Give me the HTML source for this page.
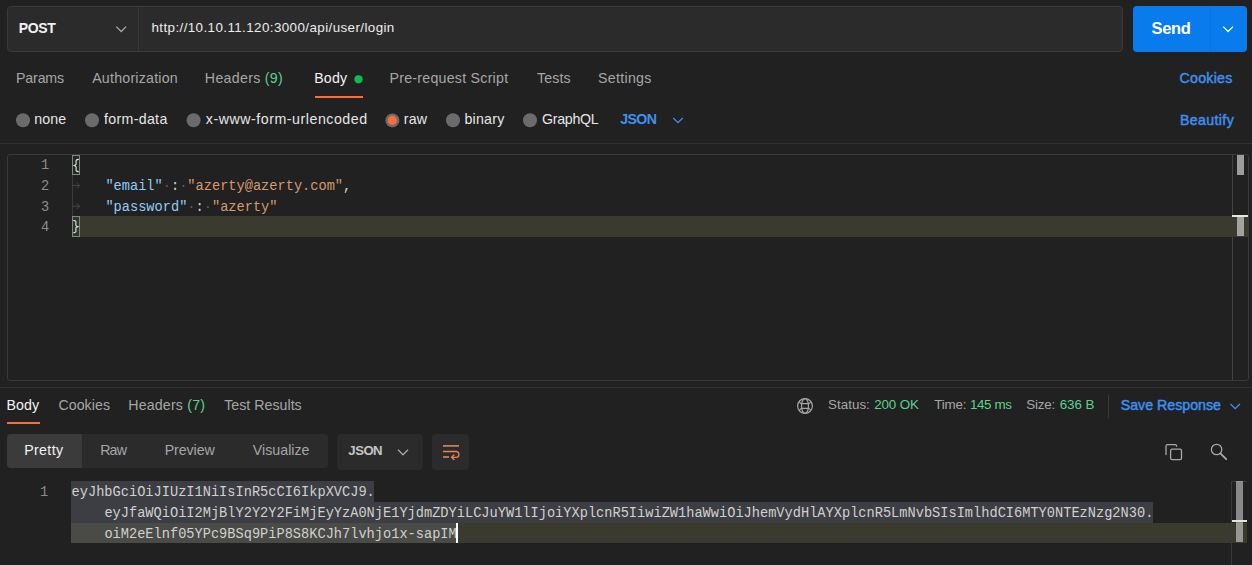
<!DOCTYPE html>
<html><head><meta charset="utf-8">
<style>
html,body{margin:0;padding:0;}
body{width:1252px;height:565px;overflow:hidden;background:#212121;position:relative;font-family:"Liberation Sans",sans-serif;}
.a{position:absolute;box-sizing:border-box;}
.t{position:absolute;white-space:nowrap;line-height:1;}
.ml{position:absolute;white-space:pre;transform-origin:0 14px;transform:scaleY(1.08);font-family:"Liberation Mono",monospace;font-size:13.670px;line-height:20.75px;height:20.75px;}
.ml>span,.ml{vertical-align:top;}
.ln{position:absolute;text-align:right;transform-origin:0 14px;transform:scaleY(1.08);font-family:"Liberation Mono",monospace;font-size:13.670px;line-height:20.75px;color:#8c8c8c;}
.tab{color:#4a4a4a;}
svg{position:absolute;overflow:visible;}
</style></head><body>
<!-- URL bar -->
<div class="a" style="left:7px;top:6px;width:1116px;height:46px;background:#2b2b2b;border:1px solid #3a3a3a;border-radius:4px;"></div>
<div class="a" style="left:138px;top:7px;width:1px;height:44px;background:#3a3a3a;"></div>
<svg width="1252" height="565" style="left:0;top:0">
  <polyline points="116.3,26.6 121.2,31.5 126.1,26.6" fill="none" stroke="#a6a6a6" stroke-width="1.3"/>
</svg>
<!-- Send -->
<div class="a" style="left:1133px;top:6px;width:114px;height:46px;background:#097bed;border-radius:4px;"></div>
<div class="a" style="left:1209.5px;top:6px;width:1px;height:46px;background:#0b72de;"></div>
<svg width="1252" height="565" style="left:0;top:0">
  <polyline points="1223.2,26.6 1228.1,31.5 1233,26.6" fill="none" stroke="#ffffff" stroke-width="1.3"/>
  <!-- body dot -->
  <circle cx="358.5" cy="79.3" r="4.1" fill="#0cbb52"/>
  <!-- radios -->
  <circle cx="23" cy="120.3" r="7" fill="#6b6b6b"/>
  <circle cx="92" cy="120.3" r="7" fill="#6b6b6b"/>
  <circle cx="193.6" cy="120.3" r="7" fill="#6b6b6b"/>
  <circle cx="392.4" cy="120.4" r="7" fill="#6b6b6b"/>
  <circle cx="392.4" cy="120.4" r="4.6" fill="#ff6c37"/>
  <circle cx="453" cy="120.3" r="7" fill="#6b6b6b"/>
  <circle cx="530" cy="120.3" r="7" fill="#6b6b6b"/>
  <polyline points="673.3,118 678,122.7 682.7,118" fill="none" stroke="#3e90f0" stroke-width="1.3"/>
</svg>
<div class="a" style="left:315px;top:96px;width:48px;height:2px;background:#ff6c37;"></div>
<!-- separator -->
<div class="a" style="left:0;top:143px;width:1252px;height:1px;background:#303030;"></div>
<!-- request editor -->
<div class="a" style="left:7px;top:154px;width:1242px;height:227px;border:1px solid #3a3a3a;border-radius:3px;"></div>
<div class="a" style="left:80px;top:216.25px;width:1152px;height:20.75px;background:#3b3a2f;"></div>
<div class="a" style="left:72px;top:155px;width:8px;height:19.8px;border:1px solid #858585;background:#1d2a1d;"></div>
<div class="a" style="left:72px;top:216.2px;width:8px;height:20.8px;border:1px solid #858585;background:#2a3828;"></div>
<svg width="1252" height="565" style="left:0;top:0"><g fill="none" stroke="#e4e4e4" stroke-width="1.15">
<path d="M78.8,159.4 C76.2,159.2 75.7,160.4 76.1,162.4 C76.5,164.5 75.8,165.3 73.4,165.5 C75.8,165.7 76.5,166.5 76.1,168.6 C75.7,170.6 76.2,171.8 78.8,171.6"/>
<path d="M73.2,220.5 C75.8,220.3 76.3,221.5 75.9,223.5 C75.5,225.6 76.2,226.4 78.6,226.6 C76.2,226.8 75.5,227.6 75.9,229.7 C76.3,231.7 75.8,232.9 73.2,232.7"/>
</g></svg>
<div class="a" style="left:72px;top:174.8px;width:1px;height:41.5px;background:#3c3c3c;"></div>
<svg width="1252" height="565" style="left:0;top:0"><g fill="none" stroke="#474747" stroke-width="1">
<path d="M72.5,185.4 H79.6 M76.8,182.6 L79.6,185.4 L76.8,188.2"/>
<path d="M72.5,206.2 H79.6 M76.8,203.4 L79.6,206.2 L76.8,209"/>
</g></svg>
<div class="a" style="left:1232px;top:155px;width:1px;height:225px;background:#434343;"></div>
<div class="a" style="left:1232px;top:216.2px;width:16px;height:20.8px;background:#3b3a2f;"></div>
<div class="a" style="left:1237px;top:155px;width:7px;height:20px;background:#9c9c9c;"></div>
<div class="a" style="left:1237px;top:216px;width:7px;height:20px;background:#a2a29e;"></div>
<div class="a" style="left:1232px;top:215.1px;width:16px;height:1.8px;background:#e6e6dc;"></div>
<div class="ln" style="top:156.00px;left:0;width:49.2px">1</div>
<div class="ln" style="top:176.75px;left:0;width:49.2px">2</div>
<div class="ln" style="top:197.50px;left:0;width:49.2px">3</div>
<div class="ln" style="top:218.25px;left:0;width:49.2px">4</div>
<div class="ml" style="left:72.60px;top:176.75px">&nbsp;&nbsp;&nbsp;&nbsp;<span style="color:#8fcdf7">"email"</span><span style="color:#5a5a5a">·</span><span style="color:#d4d4d4">:</span><span style="color:#5a5a5a">·</span><span style="color:#d69a6e">"azerty@azerty.com"</span><span style="color:#d4d4d4">,</span></div>
<div class="ml" style="left:72.60px;top:197.50px">&nbsp;&nbsp;&nbsp;&nbsp;<span style="color:#8fcdf7">"password"</span><span style="color:#5a5a5a">·</span><span style="color:#d4d4d4">:</span><span style="color:#5a5a5a">·</span><span style="color:#d69a6e">"azerty"</span></div>
<!-- response separator -->
<div class="a" style="left:0;top:387px;width:1252px;height:1px;background:#303030;"></div>
<div class="a" style="left:7px;top:422px;width:33px;height:2px;background:#ff6c37;"></div>

<div class="a" style="left:1108px;top:395px;width:1px;height:23px;background:#3a3a3a;"></div>
<!-- segmented -->
<div class="a" style="left:7px;top:434px;width:321px;height:34px;background:#2b2b2b;border-radius:4px;"></div>
<div class="a" style="left:7px;top:434px;width:75px;height:34px;background:#3b3b3b;border-radius:4px 0 0 4px;"></div>
<div class="a" style="left:337px;top:434px;width:86px;height:36px;background:#2b2b2b;border-radius:4px;"></div>
<div class="a" style="left:432px;top:434px;width:37px;height:36px;background:#2b2b2b;border-radius:4px;"></div>
<!-- response editor -->
<div class="a" style="left:71px;top:481px;width:303.2px;height:20.75px;background:#3d3e43;"></div>
<div class="a" style="left:71px;top:501.75px;width:1081.9px;height:20.75px;background:#3d3e43;"></div>
<div class="a" style="left:457px;top:522.5px;width:790px;height:20.75px;background:#3b3a2f;"></div>
<div class="a" style="left:71px;top:522.5px;width:385px;height:20.75px;background:#4a4a46;"></div>
<div class="a" style="left:1231px;top:481px;width:1px;height:84px;background:#3a3a3a;"></div>
<div class="a" style="left:1231px;top:481px;width:16px;height:1px;background:#3a3a3a;"></div>
<div class="a" style="left:1236px;top:481px;width:7px;height:61px;background:rgba(255,255,255,0.47);"></div>
<div class="a" style="left:1231.5px;top:520.2px;width:15.5px;height:2px;background:#e6e6dc;"></div>
<div class="ln" style="top:483.00px;left:0;width:48.2px">1</div>
<div class="ml" style="left:71.60px;top:483.00px"><span style="color:#d0d0d0">eyJhbGciOiJIUzI1NiIsInR5cCI6IkpXVCJ9.</span></div>
<div class="ml" style="left:71.60px;top:503.75px">&nbsp;&nbsp;&nbsp;&nbsp;<span style="color:#d0d0d0">eyJfaWQiOiI2MjBlY2Y2Y2FiMjEyYzA0NjE1YjdmZDYiLCJuYW1lIjoiYXplcnR5IiwiZW1haWwiOiJhemVydHlAYXplcnR5LmNvbSIsImlhdCI6MTY0NTEzNzg2N30.</span></div>
<div class="ml" style="left:71.60px;top:524.50px">&nbsp;&nbsp;&nbsp;&nbsp;<span style="color:#d0d0d0">oiM2eElnf05YPc9BSq9PiP8S8KCJh7lvhjo1x-sapIM</span></div>
<svg width="1252" height="565" style="left:0;top:0">
  <g fill="none" stroke="#a6a6a6" stroke-width="1.2">
    <circle cx="805" cy="406" r="7.4"/>
    <ellipse cx="805" cy="406" rx="3.5" ry="7.4"/>
    <path d="M799.3,401.4 Q800.3,403.6 801.6,403.6 H808.4 Q809.7,403.6 810.7,401.4"/>
    <path d="M799.3,410.6 Q800.3,408.4 801.6,408.4 H808.4 Q809.7,408.4 810.7,410.6"/>
  </g>
  <polyline points="1230.5,404 1235.2,408.7 1239.9,404" fill="none" stroke="#3e90f0" stroke-width="1.3"/>
  <polyline points="398,449.8 403,454.8 408,449.8" fill="none" stroke="#a6a6a6" stroke-width="1.3"/>
  <!-- wrap icon -->
  <g fill="none" stroke="#e9825a">
    <line x1="443" y1="445.9" x2="459" y2="445.9" stroke-width="1.6"/>
    <path d="M443,451.5 H456 A2.9,2.9 0 0 1 456,457.3 H451.8" stroke-width="1.3"/>
    <polyline points="453.9,455.1 451.6,457.3 453.9,459.5" stroke-width="1.4" stroke-linecap="round" stroke-linejoin="round"/>
    <line x1="443" y1="457" x2="449" y2="457" stroke-width="1.6"/>
  </g>
  <!-- copy icon -->
  <g fill="none" stroke="#a8a8a8" stroke-width="1.3" stroke-linecap="round">
    <path d="M1166,454.5 V446.2 A1.6,1.6 0 0 1 1167.6,444.6 H1175 A1.6,1.6 0 0 1 1176.6,446.2"/>
    <rect x="1170.6" y="449.1" width="10.9" height="10.5" rx="1.6"/>
  </g>
  <!-- search icon -->
  <g fill="none" stroke="#a8a8a8" stroke-linecap="round">
    <circle cx="1216.6" cy="449.5" r="5.2" stroke-width="1.3"/>
    <line x1="1220.6" y1="453.6" x2="1226.2" y2="459.2" stroke-width="1.9"/>
  </g>
</svg>
<div class="a" style="left:455.8px;top:522.8px;width:2px;height:20px;background:#ffffff;"></div>
<div class="t" style="left:18.85px;top:21.15px;font-size:14px;font-weight:700;color:#f2f2f2;letter-spacing:-0.355px">POST</div>
<div class="t" style="left:151.45px;top:21.45px;font-size:13.4px;font-weight:400;color:#ededed;letter-spacing:0.403px">http://10.10.11.120:3000/api/user/login</div>
<div class="t" style="left:1151.55px;top:20.03px;font-size:16.5px;font-weight:700;color:#ffffff;letter-spacing:-0.387px">Send</div>
<div class="t" style="left:16.05px;top:70.98px;font-size:14.2px;font-weight:400;color:#a6a6a6;letter-spacing:-0.165px">Params</div>
<div class="t" style="left:92.15px;top:70.98px;font-size:14.2px;font-weight:400;color:#a6a6a6;letter-spacing:0.234px">Authorization</div>
<div class="t" style="left:204.85px;top:70.98px;font-size:14.2px;font-weight:400;color:#a6a6a6;letter-spacing:0.296px"><span style="color:#a6a6a6">Headers </span><span style="color:#5cd18c">(9)</span></div>
<div class="t" style="left:314.15px;top:70.98px;font-size:14.2px;font-weight:400;color:#f2f2f2;letter-spacing:0.211px">Body</div>
<div class="t" style="left:389.55px;top:70.98px;font-size:14.2px;font-weight:400;color:#a6a6a6;letter-spacing:0.248px">Pre-request&nbsp;Script</div>
<div class="t" style="left:537.05px;top:70.98px;font-size:14.2px;font-weight:400;color:#a6a6a6;letter-spacing:0.114px">Tests</div>
<div class="t" style="left:598.05px;top:70.98px;font-size:14.2px;font-weight:400;color:#a6a6a6;letter-spacing:0.299px">Settings</div>
<div class="t" style="left:1179.47px;top:71.04px;font-size:14.2px;font-weight:400;color:#3e90f0;letter-spacing:0.275px;-webkit-text-stroke:0.45px #3e90f0">Cookies</div>
<div class="t" style="left:34.15px;top:112.18px;font-size:14.2px;font-weight:400;color:#e6e6e6;letter-spacing:0.136px">none</div>
<div class="t" style="left:103.95px;top:112.18px;font-size:14.2px;font-weight:400;color:#e6e6e6;letter-spacing:0.329px">form-data</div>
<div class="t" style="left:205.85px;top:112.18px;font-size:14.2px;font-weight:400;color:#e6e6e6;letter-spacing:0.534px">x-www-form-urlencoded</div>
<div class="t" style="left:403.85px;top:112.18px;font-size:14.2px;font-weight:400;color:#e6e6e6;letter-spacing:0.137px">raw</div>
<div class="t" style="left:464.45px;top:112.18px;font-size:14.2px;font-weight:400;color:#e6e6e6;letter-spacing:0.245px">binary</div>
<div class="t" style="left:542.05px;top:112.18px;font-size:14.2px;font-weight:400;color:#e6e6e6;letter-spacing:-0.302px">GraphQL</div>
<div class="t" style="left:620.15px;top:112.18px;font-size:14.2px;font-weight:700;color:#3e90f0;letter-spacing:-0.571px">JSON</div>
<div class="t" style="left:1179.97px;top:112.68px;font-size:14.2px;font-weight:400;color:#3e90f0;letter-spacing:0.363px;-webkit-text-stroke:0.45px #3e90f0">Beautify</div>
<div class="t" style="left:6.45px;top:398.38px;font-size:14.2px;font-weight:400;color:#f2f2f2;letter-spacing:0.145px">Body</div>
<div class="t" style="left:58.45px;top:398.38px;font-size:14.2px;font-weight:400;color:#a6a6a6;letter-spacing:0.050px">Cookies</div>
<div class="t" style="left:128.25px;top:398.38px;font-size:14.2px;font-weight:400;color:#a6a6a6;letter-spacing:0.176px"><span style="color:#a6a6a6">Headers </span><span style="color:#5cd18c">(7)</span></div>
<div class="t" style="left:224.25px;top:398.38px;font-size:14.2px;font-weight:400;color:#a6a6a6;letter-spacing:0.015px">Test&nbsp;Results</div>
<div class="t" style="left:827.95px;top:397.55px;font-size:13.4px;font-weight:400;color:#a6a6a6;letter-spacing:0.035px">Status:</div>
<div class="t" style="left:874.25px;top:397.55px;font-size:13.4px;font-weight:400;color:#5cd18c;letter-spacing:-0.161px">200&nbsp;OK</div>
<div class="t" style="left:934.25px;top:397.55px;font-size:13.4px;font-weight:400;color:#a6a6a6;letter-spacing:-0.195px">Time:</div>
<div class="t" style="left:969.95px;top:397.55px;font-size:13.4px;font-weight:400;color:#5cd18c;letter-spacing:-0.389px">145&nbsp;ms</div>
<div class="t" style="left:1026.15px;top:397.55px;font-size:13.4px;font-weight:400;color:#a6a6a6;letter-spacing:-0.142px">Size:</div>
<div class="t" style="left:1059.65px;top:397.55px;font-size:13.4px;font-weight:400;color:#5cd18c;letter-spacing:-0.070px">636&nbsp;B</div>
<div class="t" style="left:1120.67px;top:398.08px;font-size:14.2px;font-weight:400;color:#3e90f0;letter-spacing:0.008px;-webkit-text-stroke:0.45px #3e90f0">Save&nbsp;Response</div>
<div class="t" style="left:24.25px;top:443.08px;font-size:14.2px;font-weight:400;color:#f2f2f2;letter-spacing:0.342px">Pretty</div>
<div class="t" style="left:100.25px;top:443.08px;font-size:14.2px;font-weight:400;color:#a6a6a6;letter-spacing:-0.876px">Raw</div>
<div class="t" style="left:164.65px;top:443.08px;font-size:14.2px;font-weight:400;color:#a6a6a6;letter-spacing:-0.058px">Preview</div>
<div class="t" style="left:252.85px;top:443.08px;font-size:14.2px;font-weight:400;color:#a6a6a6;letter-spacing:0.016px">Visualize</div>
<div class="t" style="left:348.35px;top:444.42px;font-size:13.2px;font-weight:700;color:#c4c4c4;letter-spacing:-0.538px">JSON</div>
</body></html>
